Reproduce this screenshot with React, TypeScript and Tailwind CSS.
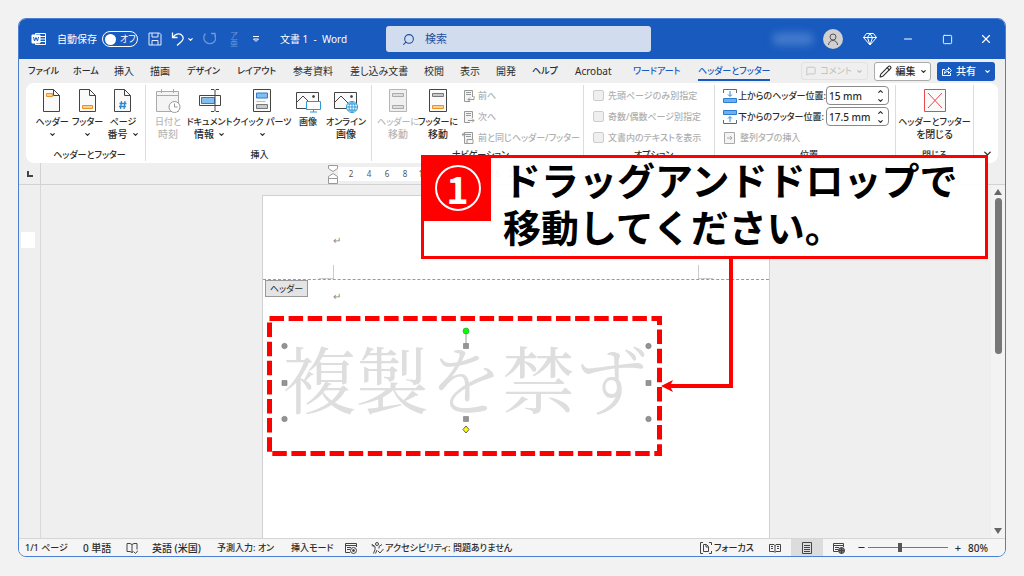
import type { ReactNode } from "react";
import { clsx } from "clsx";
import { ChevronDown, ChevronUp, MessageSquare, Minus, Pencil, Search, Square, X } from "lucide-react";

const tabs = [
  { label: "ファイル", width: "w-[45px]", kana: true },
  { label: "ホーム", width: "w-[41px]", kana: true },
  { label: "挿入", width: "w-[36px]" },
  { label: "描画", width: "w-[37px]" },
  { label: "デザイン", width: "w-[50px]", kana: true },
  { label: "レイアウト", width: "w-[56px]", kana: true },
  { label: "参考資料", width: "w-[57px]" },
  { label: "差し込み文書", width: "w-[74px]" },
  { label: "校閲", width: "w-[36px]" },
  { label: "表示", width: "w-[36px]" },
  { label: "開発", width: "w-[36px]" },
  { label: "ヘルプ", width: "w-[43px]", kana: true },
  { label: "Acrobat", width: "w-[58px]" },
  { label: "ワードアート", width: "w-[65px]", kana: true, accent: true },
  { label: "ヘッダーとフッター", width: "w-[72px]", kana: true, accent: true, active: true },
];

const rulerMarks = [2, 4, 6, 8, 10, 12, 14, 16, 18, 20, 22, 24, 26, 28, 30, 32, 34, 36, 38];

/* ---------- icons ---------- */

function Icon({ children, w = 24, h = 24 }: { children: ReactNode; w?: number; h?: number }) {
  return (
    <svg width={w} height={h} viewBox={`0 0 ${w} ${h}`} fill="none" stroke="#444" className="shrink-0" aria-hidden="true">
      {children}
    </svg>
  );
}

function PageIcon({ children }: { children: ReactNode }) {
  return (
    <Icon>
      <path d="M3.5.5h10l6 6v16h-16z" fill="#fafafa" />
      <path d="M13.5.5v6h6" />
      {children}
    </Icon>
  );
}

const headerIcon = (
  <PageIcon>
    <path d="M6.5 4.500h6v3h-6z" fill="#fbd28b" stroke="#e8912d" />
  </PageIcon>
);
const footerIcon = (
  <PageIcon>
    <path d="M6.5 16.500h10v3h-10z" fill="#fbd28b" stroke="#e8912d" />
  </PageIcon>
);
const pageNumberIcon = (
  <PageIcon>
    <path d="M10.500 12l-1 8M14 12l-1 8M8.500 14.500h7M8 17.500h7" stroke="#2b88d0" strokeWidth="1.300" />
  </PageIcon>
);
const dateIcon = (
  <Icon w={26}>
    <path d="M1.500 2.500h22v20h-22z" stroke="#aaa" fill="#f4f4f4" />
    <path d="M1.500 6.500h22M6.500 0v4M18.500 0v4" stroke="#aaa" />
    <circle cx="19.500" cy="18" r="5.500" stroke="#999" fill="#fff" />
    <path d="M19.500 14.500V18h3" stroke="#999" />
  </Icon>
);
const docInfoIcon = (
  <Icon w={26}>
    <path d="M2.500 6.500h21v10h-21z" fill="#fff" />
    <path d="M4.500 8.500h13v6h-13z" fill="#83beec" stroke="#2b7cd3" />
    <path d="M14 .5h3l1 1 1-1h3M18 1.500v20M14 22.500h3l1-1 1 1h3" />
  </Icon>
);
const quickPartsIcon = (
  <Icon>
    <path d="M3.500.500h17v22h-17z" fill="#fafafa" />
    <path d="M6.500 4h11v5h-11z" fill="#83beec" stroke="#2b7cd3" />
    <path d="M6.500 12.500h9" stroke="#bbb" />
    <path d="M6.500 15.500h11v4h-11z" fill="#c8c8c8" stroke="#777" />
  </Icon>
);
const photo = (
  <>
    <path d="M1.500 3.500h22v16h-22z" fill="#fafafa" />
    <path d="M2 13l6-6 7 7" />
    <circle cx="18.500" cy="7.500" r="1" fill="#444" />
  </>
);
const pictureIcon = (
  <Icon w={26}>
    {photo}
    <path d="M11.500 12.500h14v8h-14zM18.500 21v2M15 23h7" fill="#fff" stroke="#2b9bd8" />
  </Icon>
);
const onlinePictureIcon = (
  <Icon w={26}>
    {photo}
    <circle cx="19" cy="18" r="5.500" fill="#fff" stroke="#2b9bd8" />
    <path d="M13.500 18h11M14.500 15h9M14.500 21h9M19 12.500v11M19 12.500c-4 3-4 8 0 11M19 12.500c4 3 4 8 0 11" stroke="#2b9bd8" />
  </Icon>
);
const gotoHeaderIcon = (
  <Icon>
    <path d="M3.500.500h17v22h-17z" fill="#f0f0f0" stroke="#b5b5b5" />
    <path d="M6.500 4.500h11v3h-11zM6.500 16.500h11v3h-11z" fill="#ddd" stroke="#aaa" />
  </Icon>
);
const gotoFooterIcon = (
  <Icon>
    <path d="M3.500.500h17v22h-17z" fill="#fafafa" />
    <path d="M6.500 4.500h11v3h-11z" fill="#c8c8c8" stroke="#777" />
    <path d="M6.500 16.500h11v3h-11z" fill="#fbd28b" stroke="#e8912d" />
  </Icon>
);
const closeIcon = (
  <Icon>
    <path d="M1.500.500h21v22h-21z" fill="#fafafa" stroke="#e8474c" />
    <path d="M5 4l14 15M19 4L5 19" stroke="#e8474c" />
  </Icon>
);

function NavIcon({ d }: { d: string }) {
  return (
    <Icon w={13} h={14}>
      <path d="M8 12.500H2.500v-11h8V8" fill="#f4f4f4" stroke="#999" />
      <path d="M4 3.500h5M4 5.500h5" stroke="#999" />
      <path d={d} stroke="#999" />
    </Icon>
  );
}

function PositionIcon({ flip = false }: { flip?: boolean }) {
  return (
    <svg width="14" height="14" viewBox="0 0 14 14" fill="none" className={clsx("shrink-0", flip && "-scale-y-100")} aria-hidden="true">
      <path d="M.5 4V.5h13V4" stroke="#666" />
      <path d="M7 2v5M5 5.500l2 2 2-2" stroke="#2b88d0" />
      <path d="M.5 9.500h13v4H.5z" fill="#6db1ea" stroke="#2b7cd3" />
    </svg>
  );
}

/* ---------- title bar ---------- */

function TitleBar() {
  return (
    <header className="flex h-10 shrink-0 items-center bg-[#185abd] pl-3 text-white">
      <div className="flex w-[355px] shrink-0 items-center">
        <svg width="16" height="16" viewBox="0 0 16 16" fill="none" stroke="#fff" aria-label="Word">
          <path d="M4.500 4V2.500h10v11h-10V12M9 5.500h5M9 8h5M9 10.500h5" />
          <path d="M1 4h8v8H1z" fill="#fff" />
          <path d="M2.500 6l1 4L5 6.500 6.500 10l1-4" stroke="#185abd" />
        </svg>
        <label htmlFor="autosave" className="ml-[10px] w-[45px] text-[10px] whitespace-nowrap">
          自動保存
        </label>
        <span className="relative flex h-4 w-9 shrink-0 items-center">
          <input id="autosave" type="checkbox" role="switch" className="absolute inset-0 appearance-none rounded-full border border-white" />
          <span className="pointer-events-none ml-[3px] h-[11px] w-[11px] shrink-0 rounded-full bg-white" />
          <span className="pointer-events-none ml-1 text-[9px] whitespace-nowrap">オフ</span>
        </span>
        <button aria-label="保存" className="ml-[10px]">
          <Icon w={14} h={14}>
            <path d="M1 1h10.500L13 2.500V13H1zM4 1v4h6V1M4 13V8.500h6V13" stroke="#e4edfb" />
          </Icon>
        </button>
        <button aria-label="元に戻す" className="ml-2 flex items-center">
          <Icon w={16} h={16}>
            <path d="M2.500 1.500v5h5M3 6.500c2-3.500 6-4.500 8.500-2.500s2 4.500 0 6.500L7 14.500" stroke="#fff" strokeWidth="1.300" />
          </Icon>
          <ChevronDown size={7} strokeWidth={4} className="ml-px" />
        </button>
        <button aria-label="繰り返し" className="ml-2" disabled>
          <Icon w={14} h={14}>
            <path d="M9 1.500h4v4M12.500 2a6 6 0 1 1-9-.5" stroke="#6e99d9" strokeWidth="1.300" />
          </Icon>
        </button>
        <button aria-label="ルビ" className="ml-3 flex w-3 flex-col text-[8px] leading-[8px] text-[#6e99d9]" disabled>
          <span>ア</span>
          <span>亜</span>
        </button>
        <button aria-label="クイック アクセスのカスタマイズ" className="ml-3">
          <Icon w={8} h={8}>
            <path d="M1 1.500h6M1.500 4L4 6.500 6.500 4z" stroke="#fff" />
          </Icon>
        </button>
        <h1 className="ml-5 text-[10px] whitespace-pre">文書 1  -  Word</h1>
      </div>
      <div className="flex h-[26px] w-[265px] items-center rounded-[3px] bg-[#d1dcee] pl-4 text-[#1f4e9c]">
        <Search size={13} strokeWidth={2} className="-scale-x-100" />
        <input aria-label="検索" placeholder="検索" className="ml-[10px] w-40 bg-transparent outline-none placeholder:text-[#1f4e9c]" />
      </div>
      <div className="ml-auto flex items-center">
        <span className="h-3 w-10 rounded bg-[#5c8cd6] opacity-70 blur-[4px]" />
        <button aria-label="アカウント" className="ml-[10px] flex h-5 w-5 items-center justify-center rounded-full bg-[#d0d0d0]">
          <Icon w={14} h={14}>
            <circle cx="7" cy="5" r="3" stroke="#555" />
            <path d="M2.500 13c0-6 9-6 9 0" stroke="#555" />
          </Icon>
        </button>
        <button aria-label="Premium" className="ml-5">
          <Icon w={14} h={14}>
            <path d="M3.500 1.500h7l3 4L7 13 .5 5.500zM.5 5.500h13M4.500 5.500L7 13l2.500-7.500L7 1.500z" stroke="#fff" />
          </Icon>
        </button>
        <button aria-label="最小化" className="flex w-[38px] justify-center pl-[24px]">
          <Minus size={12} strokeWidth={2} />
        </button>
        <button aria-label="最大化" className="flex w-[38px] justify-end">
          <Square size={11} strokeWidth={2} />
        </button>
        <button aria-label="閉じる" className="mr-3 flex w-[40px] justify-end">
          <X size={14} strokeWidth={2} />
        </button>
      </div>
    </header>
  );
}

/* ---------- ribbon ---------- */

function TabRow() {
  return (
    <nav className="flex h-6 shrink-0 items-center pr-[10px] pl-[9px]">
      {tabs.map((tab) => (
        <a
          key={tab.label}
          href="#"
          className={clsx(
            "shrink-0 whitespace-nowrap",
            tab.width,
            tab.kana ? "text-[9px] font-medium" : "text-[10px]",
            tab.accent && "text-[#185abd]",
            tab.active && "mt-[2px] border-b-2 border-[#185abd]",
          )}
        >
          {tab.label}
        </a>
      ))}
      <div className="ml-auto flex shrink-0 items-center gap-[6px]">
        <button className="flex h-[18px] w-[67px] items-center justify-center gap-1 rounded-[3px] border border-[#e2e2e2] text-[9px] whitespace-nowrap text-[#bdbdbd]" disabled>
          <MessageSquare size={10} />
          コメント
          <ChevronDown size={7} strokeWidth={4} />
        </button>
        <button className="flex h-[19px] w-[57px] items-center justify-center gap-1 rounded-[3px] border border-[#aaa] bg-white text-[10px] font-medium">
          <Pencil size={13} strokeWidth={2} />
          編集
          <ChevronDown size={7} strokeWidth={4} />
        </button>
        <button className="flex h-[19px] w-[58px] items-center justify-center gap-1 rounded-[3px] bg-[#185abd] text-[10px] font-medium text-white">
          <Icon w={11} h={11}>
            <path d="M4 3.500H1.500v6h8V7M3.500 7.500c0-3 2-4 4-4V1.500l3 3-3 3V5.500c-2 0-3 .5-4 2z" stroke="#fff" />
          </Icon>
          共有
          <ChevronDown size={7} strokeWidth={4} className="ml-1" />
        </button>
      </div>
    </nav>
  );
}

function Group({ title, className, children }: { title: string; className: string; children: ReactNode }) {
  return (
    <section className={clsx("flex h-[76px] shrink-0 flex-col border-r border-[#dcdcdc]", className)}>
      <div className="flex h-16">{children}</div>
      <h2 className="text-center leading-3 whitespace-nowrap">{title}</h2>
    </section>
  );
}

type BigButtonProps = { icon: ReactNode; lines: string[]; width: string; menu?: boolean; disabled?: boolean };

function BigButton({ icon, lines, width, menu, disabled }: BigButtonProps) {
  return (
    <button disabled={disabled} className={clsx("flex shrink-0 flex-col items-center pt-1 leading-3 whitespace-nowrap", width, disabled && "text-[#b8b8b8]")}>
      <span className="mb-[3px]">{icon}</span>
      <span>{lines[0]}</span>
      <span className="flex h-3 items-center gap-1 text-[10px]">
        {lines[1]}
        {menu && <ChevronDown size={7} strokeWidth={4} />}
      </span>
    </button>
  );
}

function Option({ id, label }: { id: string; label: string }) {
  return (
    <div className="flex h-[21px] items-center gap-1 whitespace-nowrap text-[#b0b0b0]">
      <input id={id} type="checkbox" disabled className="h-[11px] w-[11px] shrink-0 appearance-none rounded-[2px] border border-[#ccc] bg-[#efefef]" />
      <label htmlFor={id}>{label}</label>
    </div>
  );
}

function Position({ id, label, value, flip }: { id: string; label: string; value: string; flip?: boolean }) {
  return (
    <div className="flex h-[21px] items-center whitespace-nowrap">
      <PositionIcon flip={flip} />
      <label htmlFor={id} className="ml-px w-[88px]">
        {label}
      </label>
      <span className="flex h-[19px] w-[63px] items-center rounded-[4px] border border-[#8a8a8a] bg-white pr-1 pl-[2px]">
        <input id={id} defaultValue={value} className="min-w-0 flex-1 bg-transparent text-[10px] outline-none" />
        <span className="flex flex-col gap-[2px]">
          <button aria-label="増やす">
            <ChevronUp size={7} strokeWidth={4} />
          </button>
          <button aria-label="減らす">
            <ChevronDown size={7} strokeWidth={4} />
          </button>
        </span>
      </span>
    </div>
  );
}

function Ribbon() {
  return (
    <div className="mx-[7px] flex h-20 shrink-0 rounded-lg bg-white pt-[2px] text-[9px] font-medium">
      <Group title="ヘッダーとフッター" className="w-[120px] pl-2">
        <BigButton icon={headerIcon} lines={["ヘッダー"]} width="w-[36px]" menu />
        <BigButton icon={footerIcon} lines={["フッター"]} width="w-[35px]" menu />
        <BigButton icon={pageNumberIcon} lines={["ページ", "番号"]} width="w-[36px]" menu />
      </Group>
      <Group title="挿入" className="w-[226px] pl-[2px]">
        <BigButton icon={dateIcon} lines={["日付と", "時刻"]} width="w-[40px]" disabled />
        <BigButton icon={docInfoIcon} lines={["ドキュメント", "情報"]} width="w-[43px]" menu />
        <BigButton icon={quickPartsIcon} lines={["クイック パーツ"]} width="w-[62px]" menu />
        <BigButton icon={pictureIcon} lines={["画像"]} width="w-[30px]" />
        <BigButton icon={onlinePictureIcon} lines={["オンライン", "画像"]} width="w-[46px]" />
      </Group>
      <Group title="ナビゲーション" className="w-[212px] pl-[6px]">
        <BigButton icon={gotoHeaderIcon} lines={["ヘッダーに", "移動"]} width="w-[40px]" disabled />
        <BigButton icon={gotoFooterIcon} lines={["フッターに", "移動"]} width="w-[40px]" />
        <div className="ml-1 text-[#b0b0b0]">
          <button className="flex h-[21px] items-center gap-[3px] whitespace-nowrap" disabled>
            <NavIcon d="M12 7v3.500H6M8 8.500l-2 2 2 2" />
            前へ
          </button>
          <button className="flex h-[21px] items-center gap-[3px] whitespace-nowrap" disabled>
            <NavIcon d="M6 10.500h6M10 8.500l2 2-2 2" />
            次へ
          </button>
          <button className="flex h-[21px] items-center gap-[3px] whitespace-nowrap" disabled>
            <NavIcon d="M0 3.500h4M2 1.500l-2 2 2 2M5 8.500h6v4H5z" />
            前と同じヘッダー/フッター
          </button>
        </div>
      </Group>
      <Group title="オプション" className="w-[131px] pl-[9px]">
        <div>
          <Option id="first-page" label="先頭ページのみ別指定" />
          <Option id="odd-even" label="奇数/偶数ページ別指定" />
          <Option id="show-text" label="文書内のテキストを表示" />
        </div>
      </Group>
      <Group title="位置" className="w-[181px] pl-2">
        <div>
          <Position id="header-top" label="上からのヘッダー位置:" value="15 mm" />
          <Position id="footer-bottom" label="下からのフッター位置:" value="17.5 mm" flip />
          <button className="flex h-[21px] items-center gap-1 text-[#b0b0b0]" disabled>
            <Icon w={13} h={14}>
              <path d="M1.500 1.500h10v11h-10zM4 7h5M7 5l2 2-2 2" fill="#f4f4f4" stroke="#aaa" />
            </Icon>
            整列タブの挿入
          </button>
        </div>
      </Group>
      <Group title="閉じる" className="w-[78px]">
        <BigButton icon={closeIcon} lines={["ヘッダーとフッター", "を閉じる"]} width="w-[77px]" />
      </Group>
      <button aria-label="リボンを折りたたむ" className="mb-1 ml-2 self-end">
        <ChevronDown size={11} strokeWidth={3} />
      </button>
    </div>
  );
}

/* ---------- document ---------- */

function Ruler() {
  return (
    <div className="flex h-[22px] shrink-0 border-b border-[#d2d2d2] pr-[14px]">
      <div className="flex w-[22px] items-center border-r border-[#d2d2d2] pl-2">
        <Icon w={6} h={6}>
          <path d="M1 0v5h5" strokeWidth={2} />
        </Icon>
      </div>
      <div className="mx-auto flex w-[508px] items-center px-[66px]">
        <Icon w={10} h={20}>
          <path d="M.5 1.500h9v3L5 7.500.5 4.500zM.5 19.500v-7L5 9.500l4.500 3v7zM.5 14.500h9" fill="#fff" stroke="#999" />
        </Icon>
        <ol className="flex h-[14px] items-center bg-white pl-1 text-[8px] text-[#555]">
          {rulerMarks.map((mark) => (
            <li key={mark} className="w-[18px] text-center">
              {mark}
            </li>
          ))}
        </ol>
      </div>
    </div>
  );
}

function Watermark() {
  return (
    <svg className="absolute top-[120px] left-1 [font-feature-settings:normal]" width="396" height="140" viewBox="0 0 396 140" fill="none">
      <text x="16" y="92" fontSize="73" fontWeight="400" fill="#dedede" fontFamily="'Noto Serif CJK JP', 'Noto Sans CJK JP', serif">
        複製を禁ず
      </text>
      <path d="M2.500 2.500h390v135H2.500z" stroke="#f00" strokeWidth="5" strokeDasharray="14.500 4.600" />
      <path d="M199 16v12" stroke="#999" />
      <circle cx="199" cy="15" r="3" fill="#0f0" stroke="#3a8f3a" strokeWidth=".6" />
      <g fill="#949494" stroke="#7a7a7a" strokeWidth=".6">
        <circle cx="17.500" cy="30" r="2.700" />
        <circle cx="381.500" cy="30" r="2.700" />
        <circle cx="17.500" cy="103" r="2.700" />
        <circle cx="381.500" cy="103" r="2.700" />
        <path d="M196.500 27.500h5v5h-5zM196.500 100.500h5v5h-5zM15 64.500h5v5h-5zM379 64.500h5v5h-5z" />
      </g>
      <path d="M199 110l3 3.500-3 3.500-3-3.500z" fill="#ff0" stroke="#665" />
    </svg>
  );
}

function Callout() {
  return (
    <div className="absolute -top-[41px] left-[158px] z-10 flex h-[104px] w-[567px] border-[3px] border-[#f00] bg-white/95">
      <div className="flex h-[63px] w-[67px] shrink-0 items-center justify-center bg-[#f00] pb-1">
        <span className="flex h-[46px] w-[46px] items-center justify-center rounded-full border-2 border-white font-['Noto_Sans_CJK_JP',sans-serif] text-[38px] leading-[38px] font-bold text-white">
          1
        </span>
      </div>
      <p className="-mt-px pl-3 text-[38px] leading-[47px] font-bold whitespace-nowrap text-black [font-feature-settings:normal]">
        ドラッグアンドドロップで
        <br />
        移動してください。
      </p>
    </div>
  );
}

function Sheet() {
  return (
    <article className="relative mx-auto w-[508px] border-x border-t border-[#d0d0d0] bg-white">
      <p className="h-[83px] pt-[38px] pl-[70px] text-[10px] leading-3 text-[#888]">↵</p>
      <div className="flex items-start border-t border-dashed border-[#999] pl-[2px]">
        <span className="flex h-[17px] w-[43px] items-center justify-center border border-[#999] bg-[#e4e4e4] text-[9px]">ヘッダー</span>
        <p className="pt-2 pl-[25px] text-[10px] leading-4 text-[#888]">↵</p>
      </div>
      <span className="absolute top-[69px] left-[56px] h-[14px] w-[15px] border-r border-b border-[#ccc]" />
      <span className="absolute top-[69px] left-[435px] h-[14px] w-[15px] border-b border-l border-[#ccc]" />
      <Watermark />
      <svg className="absolute top-[63px] left-[398px]" width="74" height="136" viewBox="0 0 74 136" fill="none">
        <path d="M70 0v127H8" stroke="#f00" strokeWidth="4" />
        <path d="M0 127l12-6-3 6 3 6z" fill="#f00" />
      </svg>
      <Callout />
    </article>
  );
}

function Workspace() {
  return (
    <main className="flex min-h-0 flex-1">
      <div className="w-[22px] shrink-0 border-r border-[#d8d8d8] pt-[47px]">
        <div className="ml-[2px] h-4 w-[14px] bg-white" />
      </div>
      <div className="flex flex-1 pt-[10px]">
        <Sheet />
      </div>
      <div className="flex w-[14px] shrink-0 flex-col items-center bg-[#f3f3f3] py-1">
        <Icon w={8} h={6}>
          <path d="M4 0l4 6H0z" fill="#666" stroke="none" />
        </Icon>
        <span className="mt-[3px] h-[156px] w-[7px] rounded-full bg-[#777]" />
        <span className="mt-auto">
          <Icon w={8} h={6}>
            <path d="M4 6l4-6H0z" fill="#666" stroke="none" />
          </Icon>
        </span>
      </div>
    </main>
  );
}

/* ---------- status bar ---------- */

function StatusBar() {
  return (
    <footer className="flex h-[18px] shrink-0 items-center border-t border-[#d5d5d5] bg-[#f5f5f5] pr-[14px] pl-[6px] text-[9px] font-medium whitespace-nowrap">
      <span className="w-[58px]">1/1 ページ</span>
      <span className="w-[43px] text-[10px]">0 単語</span>
      <span className="w-[26px]">
        <Icon w={12} h={12}>
          <path d="M1 1.500h3l2 1v8l-2-1H1zM6 2.500l2-1h3v6M6 10.500l1.500-1M8 10l1.500 1.500L12 8.500" />
        </Icon>
      </span>
      <span className="w-[65px] text-[10px]">英語 (米国)</span>
      <span className="w-[74px]">予測入力: オン</span>
      <span className="w-[54px]">挿入モード</span>
      <span className="w-[26px]">
        <Icon w={12} h={12}>
          <path d="M5 10.500H.5v-9h11V5M.5 3.500h11M2 5.500h4M2 7.500h3" />
          <circle cx="8.500" cy="8.500" r="3" />
          <circle cx="8.500" cy="8.500" r="1" fill="#444" />
        </Icon>
      </span>
      <Icon w={13} h={12}>
        <circle cx="6" cy="2" r="1.500" />
        <path d="M1 2.500L4 4.500v3l-1.500 4M11 2.500L8 4.500v2M1 2.500c-1 1 2 2 2 2M6 8l-1.500 3.500M7 9l2 2 3.500-4" />
      </Icon>
      <span className="ml-px">アクセシビリティ: 問題ありません</span>

      <div className="ml-auto flex h-full items-center">
        <button className="flex w-[69px] items-center gap-[2px]">
          <Icon w={12} h={12}>
            <path d="M3 .5H.5v11H3M9 .5h2.500V3M11.500 9v2.500H9M3.500 2.500h3l2 2v5h-5zM6 2.500v2.500h2.500" />
          </Icon>
          フォーカス
        </button>
        <button aria-label="閲覧モード" className="flex w-[22px]">
          <Icon w={12} h={12}>
            <path d="M.5 2.500H5l1 1 1-1h4.500v7H7l-1 1-1-1H.5zM6 3v7M2 4.500h2M2 6.500h2M8 4.500h2M8 6.500h2" />
          </Icon>
        </button>
        <button aria-label="印刷レイアウト" className="flex h-full w-8 items-center justify-center bg-[#dcdcdc]">
          <Icon w={10} h={12}>
            <path d="M.5.5h9v11h-9zM2 3.500h6M2 5.500h6M2 7.500h6M2 9.500h6" />
          </Icon>
        </button>
        <button aria-label="Web レイアウト" className="ml-[10px] flex w-[24px]">
          <Icon w={12} h={12}>
            <path d="M5 9.500H.5v-8h10V5M.5 3.500h10M2 5.500h4M2 7.500h3" />
            <circle cx="8.500" cy="8.500" r="3" fill="#777" />
            <path d="M5.500 8.500h6M8.500 5.500v6" />
          </Icon>
        </button>
        <button aria-label="縮小">
          <Minus size={9} strokeWidth={3} />
        </button>
        <input
          type="range"
          aria-label="ズーム"
          min={10}
          max={190}
          defaultValue={80}
          className="mx-[2px] h-[9px] w-20 appearance-none bg-[linear-gradient(#777,#777)] bg-[length:100%_1px] bg-center bg-no-repeat [&::-webkit-slider-thumb]:h-[9px] [&::-webkit-slider-thumb]:w-1 [&::-webkit-slider-thumb]:appearance-none [&::-webkit-slider-thumb]:bg-[#555]"
        />
        <button aria-label="拡大" className="w-4 text-center text-[11px]">
          +
        </button>
        <span className="w-[25px] pl-[2px] text-[10px]">80%</span>
      </div>
    </footer>
  );
}

export default function App() {
  return (
    <div className="flex h-screen min-h-[400px] flex-col bg-[#f2f2f2] px-[18px] pt-[18px] pb-[19px] font-['Noto_Sans','Noto_Sans_CJK_JP',sans-serif] text-[11px] leading-4 text-[#2b2b2b] [font-feature-settings:'palt']">
      <div className="flex min-h-0 flex-1 flex-col overflow-hidden rounded-lg border border-[#4a80cf] bg-[#efefef]">
        <TitleBar />
        <TabRow />
        <Ribbon />
        <Ruler />
        <Workspace />
        <StatusBar />
      </div>
    </div>
  );
}
